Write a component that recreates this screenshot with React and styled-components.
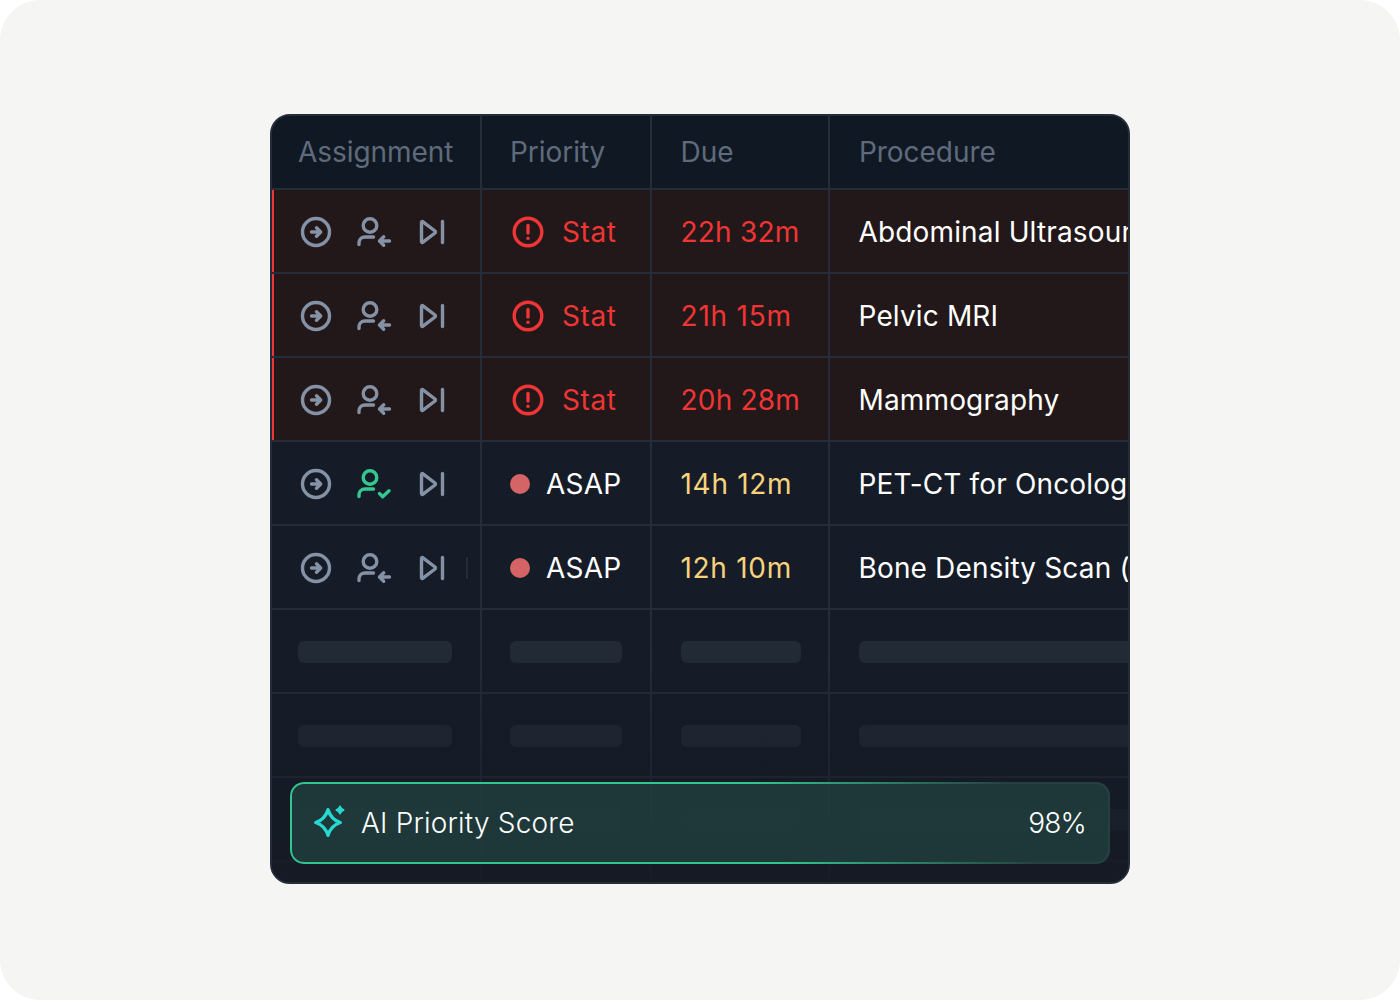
import React from "react";
import styled, { createGlobalStyle, css } from "styled-components";

const GlobalStyle = createGlobalStyle`
	html, body {
		margin: 0;
		background: #ffffff;
	}
	* {
		box-sizing: border-box;
	}
`;

// the digit 1 runs wider in the reference, so each time gets its own tracking
const rows = [
	{ stat: true, due: "22h 32m", tracking: 0.2, procedure: "Abdominal Ultrasound" },
	{ stat: true, due: "21h 15m", tracking: 0.8, procedure: "Pelvic MRI" },
	{ stat: true, due: "20h 28m", tracking: 0.2, procedure: "Mammography" },
	{ due: "14h 12m", tracking: 0.7, procedure: "PET-CT for Oncology", assigned: true },
	{ due: "12h 10m", tracking: 0.7, procedure: "Bone Density Scan (DEXA)", peek: true },
];

const CircleArrow = () => (
	<Icon viewBox="0 0 36 36">
		<circle cx="18" cy="18" r="13.500" />
		<path d="M13.500 18h9M18.500 13.800l4.200 4.200-4.200 4.200" />
	</Icon>
);

const UserArrow = () => (
	<Icon viewBox="0 0 36 36">
		<circle cx="14" cy="11.500" r="6.800" />
		<path d="M3 30.500v-1.500c0-3.500 2.500-6 6-6h8.500" />
		<path d="M33.500 27H23.500M27.700 22.800 23.500 27l4.200 4.200" />
	</Icon>
);

const UserCheck = () => (
	<Icon viewBox="0 0 36 36" $color="#34c78f">
		<circle cx="14" cy="11.500" r="6.800" />
		<path d="M3 30.500v-1.500c0-3.500 2.500-6 6-6h8.500" />
		<path d="M23.500 27.500l3.200 3.200 6.300-6" />
	</Icon>
);

const SkipEnd = () => (
	<Icon viewBox="0 0 36 36">
		<path d="M7.500 8.500v19c0 .8.900 1.200 1.500.7L21 19c.6-.5.600-1.500 0-2L9 7.800c-.6-.5-1.500-.1-1.500.7z" />
		<path d="M28.500 7.500v21" />
	</Icon>
);

const AlertCircle = () => (
	<Icon viewBox="0 0 36 36" $color="#ef3535">
		<circle cx="18" cy="18" r="13.800" />
		<path d="M18 11.500v7.500" />
		<path d="M18 24.300v.1" />
	</Icon>
);

const Sparkle = () => (
	<SparkleSvg viewBox="0 0 36 36">
		<path d="M16 4.700Q19 14.500 28.300 17.500Q19 20.500 16 30.300Q13 20.500 3.700 17.500Q13 14.500 16 4.700z" />
		<path
			d="M28 1.500c.7 2 1.500 2.800 3.500 3.500-2 .7-2.800 1.500-3.500 3.500-.7-2-1.500-2.800-3.500-3.500 2-.7 2.800-1.500 3.500-3.500z"
			fill="#27d8d0"
			strokeWidth="2"
		/>
	</SparkleSvg>
);

const App = () => {
	return (
		<>
			<GlobalStyle />
			<Page>
				<Card>
					<HeaderRow>
						<HeadCell>Assignment</HeadCell>
						<HeadCell>Priority</HeadCell>
						<HeadCell>Due</HeadCell>
						<HeadCell>Procedure</HeadCell>
					</HeaderRow>

					{rows.map((row) => (
						<Row key={row.due} $stat={row.stat}>
							<IconCell>
								<CircleArrow />
								{row.assigned ? <UserCheck /> : <UserArrow />}
								<SkipEnd />
								{row.peek && <Peek />}
							</IconCell>
							<Cell>
								{row.stat ? (
									<StatBadge>
										<AlertCircle />
										<span>Stat</span>
									</StatBadge>
								) : (
									<AsapBadge>
										<Dot />
										<span>ASAP</span>
									</AsapBadge>
								)}
							</Cell>
							<Cell>
								<Due $stat={row.stat} $tracking={row.tracking}>
									{row.due}
								</Due>
							</Cell>
							<Cell>
								<Procedure>{row.procedure}</Procedure>
							</Cell>
						</Row>
					))}

					{[0, 1, 2, 3].map((i) => (
						<Row key={i}>
							<Cell>{i < 3 && <Skeleton $width={154} />}</Cell>
							<Cell>{i < 3 && <Skeleton $width={112} />}</Cell>
							<Cell>{i < 3 && <Skeleton $width={120} />}</Cell>
							<Cell>{i < 3 && <Skeleton $width={300} />}</Cell>
						</Row>
					))}

					<Fade />

					<ScoreBar>
						<ScoreLabel>
							<Sparkle />
							AI Priority Score
						</ScoreLabel>
						<ScoreValue>98%</ScoreValue>
					</ScoreBar>
				</Card>
			</Page>
		</>
	);
};

export default App;

const Page = styled.div`
	width: 1400px;
	height: 1000px;
	background: #f5f5f3;
	border-radius: 40px;
	display: flex;
	justify-content: center;
	padding-top: 114px;
	font-family: Inter, "Liberation Sans", sans-serif;
`;

const Card = styled.div`
	position: relative;
	width: 860px;
	height: 770px;
	background: #151b26;
	border: 2px solid #252d3b;
	border-radius: 20px;
	overflow: hidden;
`;

const columns = css`
	display: grid;
	grid-template-columns: 210px 170px 178px 1fr;
	box-shadow: inset 0 -2px 0 #252d3b;
`;

const cellBox = css`
	display: flex;
	align-items: center;
	min-width: 0;
	overflow: hidden;
	border-right: 2px solid #252d3b;
	font-size: 28px;
	white-space: nowrap;

	&:nth-child(1) {
		padding-left: 26px;
	}
	&:nth-child(2) {
		padding-left: 28px;
	}
	&:nth-child(3) {
		padding-left: 28.500px;
	}
	&:nth-child(4) {
		padding-left: 28.500px;
		border-right: 0;
	}
`;

const HeaderRow = styled.div`
	${columns}
	height: 74px;
	background: #101923;
`;

const HeadCell = styled.div`
	${cellBox}
	padding-bottom: 2px;
	color: #5f6b7c;
	letter-spacing: -0.05px;

	&:nth-child(4) {
		padding-left: 29px;
	}
`;

const Row = styled.div`
	${columns}
	position: relative;
	height: 84px;
	background: ${(p) => (p.$stat ? "#231819" : "#151c27")};

	&::before {
		content: "";
		display: ${(p) => (p.$stat ? "block" : "none")};
		position: absolute;
		left: 0;
		top: 0;
		bottom: 2px;
		width: 2px;
		background: #ef3535;
	}
`;

const Cell = styled.div`
	${cellBox}
`;

const IconCell = styled(Cell)`
	gap: 22px;
`;

const Icon = styled.svg`
	flex: none;
	width: 36px;
	height: 36px;
	fill: none;
	stroke: ${(p) => p.$color || "#8592a6"};
	stroke-width: 3.4;
	stroke-linecap: round;
	stroke-linejoin: round;
`;

const Peek = styled.div`
	flex: none;
	width: 2px;
	height: 22px;
	margin-left: -6px;
	background: #252d3b;
`;

const StatBadge = styled.div`
	display: flex;
	align-items: center;
	gap: 16px;
	color: #ef3535;
	letter-spacing: 0.6px;
`;

const AsapBadge = styled.div`
	display: flex;
	align-items: center;
	gap: 16px;
	color: #ffffff;
	letter-spacing: 0.2px;
`;

const Dot = styled.div`
	width: 20px;
	height: 20px;
	border-radius: 50%;
	background: #d56467;
`;

const Due = styled.div`
	color: ${(p) => (p.$stat ? "#ef3535" : "#f8d27c")};
	letter-spacing: ${(p) => p.$tracking}px;
`;

const Procedure = styled.div`
	color: #ffffff;
	letter-spacing: 0.15px;
`;

const Skeleton = styled.div`
	flex: none;
	width: ${(p) => p.$width}px;
	height: 22px;
	border-radius: 6px;
	background: #232b37;
`;

const Fade = styled.div`
	position: absolute;
	left: 0;
	right: 0;
	top: 520px;
	bottom: 0;
	background: linear-gradient(rgba(21, 26, 36, 0), rgba(21, 26, 36, 0.9));
`;

const ScoreBar = styled.div`
	position: absolute;
	left: 18px;
	right: 18px;
	bottom: 18px;
	height: 82px;
	display: flex;
	align-items: center;
	justify-content: space-between;
	padding: 0 24px 0 22px;
	border-radius: 14px;
	background: rgba(34, 68, 66, 0.7);
	color: #ffffff;
	font-size: 28px;
	font-weight: 300;

	&::before {
		content: "";
		position: absolute;
		inset: 0;
		padding: 2px;
		border-radius: 14px;
		background: linear-gradient(70deg, #34c48f 0%, #34c48f 58%, #26403f 88%);
		mask:
			linear-gradient(#000, #000) content-box,
			linear-gradient(#000, #000);
		mask-composite: exclude;
	}
`;

const ScoreLabel = styled.div`
	display: flex;
	align-items: center;
	gap: 13px;
	letter-spacing: 0.2px;
`;

const ScoreValue = styled.span`
	letter-spacing: -0.8px;
`;

const SparkleSvg = styled.svg`
	width: 36px;
	height: 36px;
	fill: none;
	stroke: #27d8d0;
	stroke-width: 3.4;
	stroke-linejoin: round;
`;
